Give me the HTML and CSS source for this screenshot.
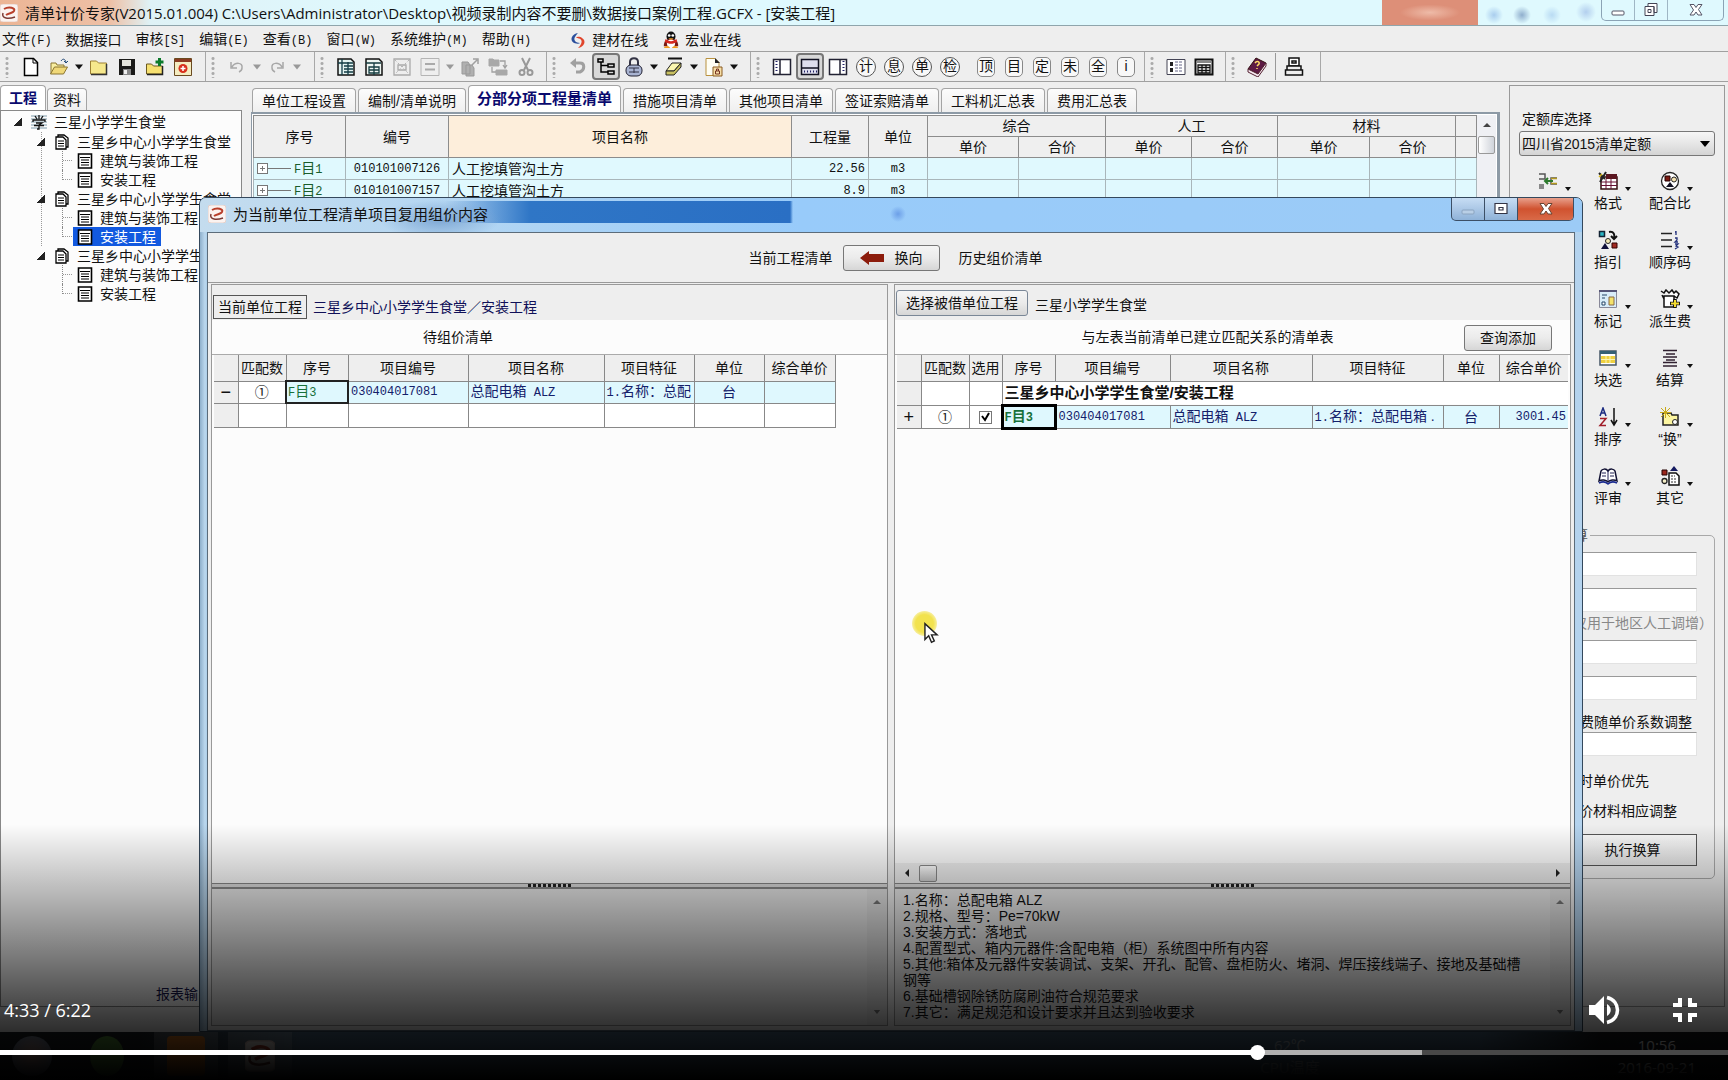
FILE: index.html
```html
<!DOCTYPE html>
<html lang="zh-CN">
<head>
<meta charset="utf-8">
<title>清单计价专家</title>
<link rel="stylesheet" href="styles.css">
</head>
<body>
<svg class="sprite" aria-hidden="true">
  <symbol id="logo" viewBox="0 0 18 18"><rect width="18" height="18" rx="3" fill="#fbf3f0" stroke="#e6cfc8"/><path d="M4 5c5-3 12-1 10 2-1 2-5 2-8 4" fill="none" stroke="#b8402c" stroke-width="2"/><path d="M3 9c-2 6 6 6 12 4" fill="none" stroke="#7b3a34" stroke-width="1.500"/></symbol>
  <symbol id="down" viewBox="0 0 10 6"><path d="M1 0.500h8l-4 5z" fill="currentColor"/></symbol>
  <symbol id="doc" viewBox="0 0 16 16"><path d="M4 3V1h6l4 3v9h-2M2 3h7l3 3v9H2z" fill="#fff" stroke="#000" stroke-width="1.300"/><path d="M4 7h6M4 9.500h6M4 12h6" stroke="#000"/></symbol>
  <symbol id="sheet" viewBox="0 0 16 16"><path d="M1.500 1h13v14h-13z" fill="#fff" stroke="#000" stroke-width="1.600"/><path d="M3 4.500h10M4 7h8M4 9.500h8M4 12h8" stroke="#000" stroke-width="1.200"/></symbol>
  <symbol id="up" viewBox="0 0 8 6"><path d="M0 5h8L4 1z" fill="currentColor"/></symbol>
</svg>
<div class="player">
  <div class="screen">
    <header class="titlebar">
      <svg class="i18"><use href="#logo"/></svg>
      <h1>清单计价专家(V2015.01.004) C:\Users\Administrator\Desktop\视频录制内容不要删\数据接口案例工程.GCFX - [安装工程]</h1>
      <span class="ghost"></span>
      <span class="dots"></span>
      <div class="winbtns">
        <button aria-label="最小化"><svg viewBox="0 0 16 16" class="i16"><rect x="2" y="9" width="12" height="4" rx="1" fill="#fff" stroke="#556"/></svg></button>
        <button aria-label="还原"><svg viewBox="0 0 16 16" class="i16"><path d="M5 1.500h9v9h-3V4.500H5zM2 4.500h9v9H2zM5 7.500h3v3H5z" fill="#fff" stroke="#445"/></svg></button>
        <button aria-label="关闭" class="wide"><svg viewBox="0 0 16 16" class="i16"><path d="M2 2.500h4l2 3 2-3h4l-3.500 5 3.500 5.500h-4l-2-3-2 3H2L5.500 8z" fill="#fff" stroke="#556"/></svg></button>
      </div>
    </header>

    <nav class="menubar">
      <a href="#">文件<span class="m">(F)</span></a><a href="#">数据接口</a><a href="#">审核<span class="m">[S]</span></a><a href="#">编辑<span class="m">(E)</span></a><a href="#">查看<span class="m">(B)</span></a><a href="#">窗口<span class="m">(W)</span></a><a href="#">系统维护<span class="m">(M)</span></a><a href="#">帮助<span class="m">(H)</span></a>
      <a href="#" class="online first"><svg viewBox="0 0 18 18" class="i18"><path d="M9 2C3 3 0 9 5 12c3 1 5 1 6 0C7 12 4 9 6 6c1-2 2-3 3-4z" fill="#2b4f9c"/><path d="M9 17c6-1 9-7 4-10-3-2-5-1-6 0 4 0 7 2 5 6-1 2-2 3-3 4z" fill="#e0452c"/></svg>建材在线</a>
      <a href="#" class="online"><svg viewBox="0 0 18 20" class="i18"><ellipse cx="9" cy="6" rx="5" ry="5.500" fill="#111"/><path d="M1 17c0-5 2-8 8-8s8 3 8 8z" fill="#7a1a14"/><ellipse cx="9" cy="14" rx="4.500" ry="4.500" fill="#fff"/><path d="M3 9c4 3 8 3 12 0l1 3c-5 3-9 3-14 0z" fill="#d5281f"/><circle cx="7" cy="5" r="1.500" fill="#fff"/><circle cx="11" cy="5" r="1.500" fill="#fff"/><path d="M6 8h6l-3 2zM1 19c1-3 6-3 7 0zM10 19c1-3 6-3 7 0z" fill="#f39a1d"/></svg>宏业在线</a>
    </nav>

    <div class="toolbar">
      <div class="group g1"><span class="grip"></span>
        <button aria-label="新建"><svg viewBox="0 0 20 20"><path d="M3.500 1.500h9l4 4v13h-13z" fill="#fff" stroke="#000" stroke-width="1.500"/><path d="M12 2v4h4" fill="none" stroke="#000"/></svg></button>
        <button aria-label="打开"><svg viewBox="0 0 20 20"><path d="M2 17V6h5l1 2h7v3" fill="#f8eea0" stroke="#8a7430"/><path d="M1.500 17l4-7h13l-4 7z" fill="#f0d878" stroke="#8a7430"/><path d="M12 4c2-3 4-2 5 1m-2-1l2 2 2-2" fill="none" stroke="#234a78"/></svg></button><span class="caret"><svg><use href="#down"/></svg></span>
        <button aria-label="目录"><svg viewBox="0 0 20 20"><path d="M1.500 17V4h6l2 2h8v11z" fill="#f6e88c" stroke="#9c8034"/><path d="M17.500 7v10.500H2" fill="none" stroke="#333" stroke-width="1.500"/></svg></button>
        <button aria-label="保存"><svg viewBox="0 0 20 20"><path d="M2 2h16v16H2z" fill="#1a1a18"/><path d="M5 3h9v6H5z" fill="#e4e4dc"/><path d="M6 12h8v6H6z" fill="#888"/><path d="M7 13h3v4H7z" fill="#eee"/></svg></button>
        <button aria-label="添加"><svg viewBox="0 0 20 20"><path d="M1.500 17V7h5l2 2h9v8z" fill="#f6e070" stroke="#6c5a20"/><path d="M17.500 9v8.500H2" fill="none" stroke="#222" stroke-width="1.500"/><path d="M14.500 1v8M10.500 5h8" stroke="#0c7a2a" stroke-width="3"/></svg></button>
        <button aria-label="备份"><svg viewBox="0 0 20 20"><path d="M1.500 1.500h17v17h-17z" fill="#f4ecc0" stroke="#6a4a20"/><path d="M2 2h16v3H2z" fill="#8a3a20"/><circle cx="10" cy="11.500" r="4.500" fill="#d8301c"/><path d="M10 9v5M7.500 11.500h5" stroke="#fff" stroke-width="1.500"/></svg></button>
      </div>
      <div class="group g2"><span class="grip"></span>
        <button aria-label="撤销"><svg viewBox="0 0 20 20"><path d="M4 5v6h6M5 10c3-5 11-5 10 1 0 2-1 3-3 4" fill="none" stroke="#a8a8a8" stroke-width="1.500"/></svg></button><span class="caret off"><svg><use href="#down"/></svg></span>
        <button aria-label="重做"><svg viewBox="0 0 20 20"><path d="M16 5v6h-6M15 10C12 5 4 5 5 11c0 2 1 3 3 4" fill="none" stroke="#a8a8a8" stroke-width="1.500"/></svg></button><span class="caret off"><svg><use href="#down"/></svg></span>
      </div>
      <div class="group g3"><span class="grip"></span>
        <button aria-label="插入行"><svg viewBox="0 0 20 20"><path d="M2 2h13l3 3v13H2z" fill="#e4f4f2" stroke="#111" stroke-width="1.500"/><path d="M2 6h15M6 2v16M8 9h9M8 12h9M8 15h9M12 5v13" stroke="#123c46" stroke-width="1.300"/></svg></button>
        <button aria-label="插入子行"><svg viewBox="0 0 20 20"><path d="M2 2h13l3 3v13H2z" fill="#eef6f2" stroke="#111" stroke-width="1.500"/><path d="M2 6h15M5 10h10v6H5zM5 13h10M10 6v12" fill="none" stroke="#143c40" stroke-width="1.300"/></svg></button>
        <button aria-label="展开"><svg viewBox="0 0 20 20"><path d="M2 2h16v16H2zM6 8h8v5H6z" fill="none" stroke="#aaa" stroke-width="1.300"/><path d="M3 3l14 14M17 3L3 17" stroke="#b4b4b4" stroke-dasharray="2 2"/></svg></button>
        <button aria-label="合并"><svg viewBox="0 0 20 20"><path d="M1 1.500h18v17H1z" fill="none" stroke="#b4b4b4"/><path d="M5 7h10M5 12.500h10" stroke="#aaa" stroke-width="2"/></svg></button><span class="caret off"><svg><use href="#down"/></svg></span>
        <button aria-label="复制"><svg viewBox="0 0 20 20"><path d="M2 5h6l2 3v9H2zM6 8h6l2 3v8H6z" fill="#b0b0b0" stroke="#999"/><path d="M12 8l5-5m-4-1h5v5" fill="none" stroke="#a0a0a0" stroke-width="1.500"/></svg></button>
        <button aria-label="粘贴"><svg viewBox="0 0 20 20"><path d="M1 2h4l1 1h5v6H1zM8 13h11v5H8z" fill="#a8a8a8" stroke="#a8a8a8"/><path d="M12 4h5v6m-2-2l2 3 2-3M4 10v5h4" fill="none" stroke="#a0a0a0" stroke-width="1.300"/></svg></button>
        <button aria-label="剪切"><svg viewBox="0 0 20 20"><path d="M6 1l6 12M14 1L8 13" stroke="#999" stroke-width="2"/><circle cx="6" cy="15.500" r="2.500" fill="none" stroke="#999" stroke-width="2"/><circle cx="14" cy="15.500" r="2.500" fill="none" stroke="#999" stroke-width="2"/></svg></button>
      </div>
      <div class="group g4"><span class="grip"></span>
        <button aria-label="返回"><svg viewBox="0 0 20 20"><path d="M8 1v10L2 6z" fill="#a0a0a0"/><path d="M7 6h5c5 0 5 7 0 9h-4" fill="none" stroke="#a0a0a0" stroke-width="3"/></svg></button>
        <button aria-label="树形" class="pressed"><svg viewBox="0 0 20 20"><path d="M2 2h5v3H2zM12 7h6v3h-6zM12 14h6v3h-6zM5 5v10h7M5 8.500h7" fill="none" stroke="#000" stroke-width="1.500"/></svg></button>
        <button aria-label="锁定"><svg viewBox="0 0 20 20"><path d="M6 9V5c0-5 8-5 8 0v4" fill="none" stroke="#334" stroke-width="2"/><rect x="2" y="8" width="16" height="11" rx="5" fill="#a9b4d2" stroke="#223"/><path d="M5 11h10M5 15h10M10 11v5" stroke="#334"/></svg></button><span class="caret"><svg><use href="#down"/></svg></span>
        <button aria-label="清除"><svg viewBox="0 0 20 20"><path d="M4 1.500h14" stroke="#111" stroke-width="2"/><path d="M8 6h9l-7 8H2z" fill="#fbf7b0" stroke="#222"/><path d="M2 14h8l7-8v4l-7 8H2z" fill="#c8c060" stroke="#222"/></svg></button><span class="caret"><svg><use href="#down"/></svg></span>
        <button aria-label="文件锁"><svg viewBox="0 0 20 20"><path d="M2 1.500h9l4 4v13H2z" fill="#fffef4" stroke="#b9913f"/><path d="M11 1v5h5z" fill="#222"/><path d="M9 10h9v9H9z" fill="#f6dfa8" stroke="#8a5a20"/><path d="M11.500 14h4v3h-4zM12.500 14v-2h2v2" fill="none" stroke="#732"/></svg></button><span class="caret"><svg><use href="#down"/></svg></span>
      </div>
      <div class="group g5"><span class="grip"></span>
        <button aria-label="左栏"><svg viewBox="0 0 20 20"><path d="M1.500 2.500h17v15h-17zM8 2v16" fill="#fff" stroke="#223" stroke-width="1.500"/><path d="M4.500 4v12" stroke="#226" stroke-width="2" stroke-dasharray="1 2"/></svg></button>
        <button aria-label="下栏" class="pressed"><svg viewBox="0 0 20 20"><path d="M1.500 2.500h17v15h-17zM2 11h16" fill="#dde" stroke="#112" stroke-width="1.500"/><path d="M4 14.500h13" stroke="#226" stroke-width="2" stroke-dasharray="1 2"/></svg></button>
        <button aria-label="右栏"><svg viewBox="0 0 20 20"><path d="M1.500 2.500h17v15h-17zM12 2v16" fill="#fff" stroke="#223" stroke-width="1.500"/><path d="M15.500 4v12" stroke="#226" stroke-width="2" stroke-dasharray="1 2"/></svg></button>
        <button><span class="ring">计</span></button><button><span class="ring">息</span></button><button><span class="ring">单</span></button><button><span class="ring">检</span></button>
        <button class="gap"><span class="ring sq">顶</span></button><button><span class="ring sq">目</span></button><button><span class="ring sq">定</span></button><button><span class="ring sq">未</span></button><button><span class="ring sq">全</span></button><button><span class="ring sq">i</span></button>
      </div>
      <div class="group g6"><span class="grip"></span>
        <button aria-label="列表"><svg viewBox="0 0 20 20"><path d="M1 2.500h18v15H1z" fill="#fff" stroke="#445"/><path d="M4 5h3v4H4zM4 11h3v4H4z" fill="#222"/><path d="M9 5h8M9 8h8M9 11h8M9 14h8" stroke="#668" stroke-dasharray="3 1"/></svg></button>
        <button aria-label="表格"><svg viewBox="0 0 20 20"><path d="M1.500 2.500h17v15h-17z" fill="#fff" stroke="#111" stroke-width="2"/><path d="M3 5h14" stroke="#111"/><path d="M4 8h12v8H4zM4 10.500h12M4 13.500h12M8 8v8M12 8v8" fill="none" stroke="#111" stroke-width="1.300"/></svg></button>
      </div>
      <div class="group g7"><span class="grip"></span>
        <button aria-label="帮助"><svg viewBox="0 0 20 20"><path d="M1 12L9 1l10 5-8 11z" fill="#5d1a44" stroke="#311"/><path d="M1 12v3l10 5 8-11V6l-8 11z" fill="#f4e8ee" stroke="#523"/><path d="M8 6c2-3 5-1 4 1l-2 2m0 2v1" fill="none" stroke="#fd6" stroke-width="1.500"/></svg></button>
        <button aria-label="打印" class="sepd"><svg viewBox="0 0 20 20"><path d="M5 1h10v8H5zM8 4h4v2H8z" fill="#fff" stroke="#111" stroke-width="1.500"/><path d="M3 9h14v4H3zM1.500 13h17v5h-17z" fill="#eee" stroke="#111" stroke-width="1.500"/></svg></button>
      </div>
    </div>

    <div class="workspace">
      <aside class="side">
        <div class="tabs small"><button class="tab on">工程</button><button class="tab">资料</button></div>
        <div class="treebox">
          <div class="node lv0"><i class="tri"></i><svg class="i16 stripe" viewBox="0 0 16 16"><path d="M0 2h16M0 5h16M0 8h16M0 11h16M0 14h16" stroke="#7f9cab"/><path d="M4 2l2 3M8 1v4M12 2l-2 3M2 8V6h12v2M5 9h6l-3 2v4H6M3 11.500h10" fill="none" stroke="#111" stroke-width="1.300"/></svg>三星小学学生食堂</div>
          <div class="branch cont">
            <div class="node lv1"><i class="tri"></i><svg class="i16"><use href="#doc"/></svg>三星乡中心小学学生食堂</div>
            <div class="node lv2"><i class="elbow"></i><span class="leaf"><svg class="i16"><use href="#sheet"/></svg>建筑与装饰工程</span></div>
            <div class="node lv2"><i class="elbow last"></i><span class="leaf"><svg class="i16"><use href="#sheet"/></svg>安装工程</span></div>
          </div>
          <div class="branch cont">
            <div class="node lv1"><i class="tri"></i><svg class="i16"><use href="#doc"/></svg>三星乡中心小学学生食堂</div>
            <div class="node lv2"><i class="elbow"></i><span class="leaf"><svg class="i16"><use href="#sheet"/></svg>建筑与装饰工程</span></div>
            <div class="node lv2"><i class="elbow last"></i><span class="leaf sel"><svg class="i16"><use href="#sheet"/></svg>安装工程</span></div>
          </div>
          <div class="branch">
            <div class="node lv1"><i class="tri"></i><svg class="i16"><use href="#doc"/></svg>三星乡中心小学学生食堂</div>
            <div class="node lv2"><i class="elbow"></i><span class="leaf"><svg class="i16"><use href="#sheet"/></svg>建筑与装饰工程</span></div>
            <div class="node lv2"><i class="elbow last"></i><span class="leaf"><svg class="i16"><use href="#sheet"/></svg>安装工程</span></div>
          </div>
          <a href="#" class="report">报表输出</a>
        </div>
      </aside>

      <main class="center">
        <div class="tabs"><button class="tab">单位工程设置</button><button class="tab">编制/清单说明</button><button class="tab on">分部分项工程量清单</button><button class="tab">措施项目清单</button><button class="tab">其他项目清单</button><button class="tab">签证索赔清单</button><button class="tab">工料机汇总表</button><button class="tab">费用汇总表</button></div>
        <div class="gridframe">
          <table class="maingrid">
            <colgroup><col class="w92"><col class="w103"><col><col class="w77"><col class="w59"><col class="w91"><col class="w87"><col class="w86"><col class="w86"><col class="w92"><col class="w86"><col class="w21"></colgroup>
            <thead>
              <tr><th rowspan="2">序号</th><th rowspan="2">编号</th><th rowspan="2" class="hot">项目名称</th><th rowspan="2">工程量</th><th rowspan="2">单位</th><th colspan="2">综合</th><th colspan="2">人工</th><th colspan="2">材料</th><th></th></tr>
              <tr><th>单价</th><th>合价</th><th>单价</th><th>合价</th><th>单价</th><th>合价</th><th></th></tr>
            </thead>
            <tbody>
              <tr><td class="seq"><span class="exp"></span><span class="m">F</span>目<span class="m">1</span></td><td class="c m">010101007126</td><td>人工挖填管沟土方</td><td class="r m">22.56</td><td class="c m">m3</td><td></td><td></td><td></td><td></td><td></td><td></td><td></td></tr>
              <tr><td class="seq"><span class="exp"></span><span class="m">F</span>目<span class="m">2</span></td><td class="c m">010101007157</td><td>人工挖填管沟土方</td><td class="r m">8.9</td><td class="c m">m3</td><td></td><td></td><td></td><td></td><td></td><td></td><td></td></tr>
            </tbody>
          </table>
          <div class="vbar"><svg class="arr"><use href="#up"/></svg><span class="vthumb"></span></div>
        </div>
      </main>

      <aside class="palette">
        <label for="lib">定额库选择</label>
        <select id="lib"><option>四川省2015清单定额</option></select>
        <div class="tools">
          <button class="tool c1 dd" aria-label="插入"><svg viewBox="0 0 20 20"><path d="M1 3h6v5H1M19 7h-6v6h6" fill="none" stroke="#555" stroke-width="1.500"/><path d="M13 7.500h6M13 12.500h6" stroke="#b59a20" stroke-width="1.500"/><path d="M7 10h8M10 7l-3 3 3 3" fill="none" stroke="#2c7a2c" stroke-width="2"/><path d="M1 13h5v5H1z" fill="#888"/></svg></button>
          <button class="tool dd"><svg viewBox="0 0 20 20"><path d="M3 6h16v12H3z" fill="#fff" stroke="#311" stroke-width="1.500"/><path d="M8 3h11v5H8z" fill="#5a1620"/><path d="M3 11h16M3 14.500h16M8 8v10M13 8v10" stroke="#613"/><path d="M1 2l6 6M8 1l-6 10" stroke="#222" stroke-width="2"/><path d="M1 6l3-3" stroke="#d8b81c" stroke-width="1.500"/></svg>格式</button>
          <button class="tool dd"><svg viewBox="0 0 20 20"><circle cx="10" cy="10" r="8.500" fill="#fff" stroke="#222" stroke-width="1.300"/><path d="M5 5h5v5H5z" fill="#7a1a12" stroke="#200"/><circle cx="14" cy="8.500" r="2.500" fill="#f5e3b0" stroke="#222"/><path d="M6 16l4-5 4 5z" fill="#112"/></svg>配合比</button>
          <button class="tool"><svg viewBox="0 0 20 20"><path d="M1.500 1.500h5v5h-5z" fill="#2ab5c4" stroke="#123" stroke-width="1.500"/><path d="M11 2c5-1 6 3 5 6m-3-2l3 3 3-3" fill="none" stroke="#111" stroke-width="2"/><circle cx="10" cy="11" r="2.500" fill="#f4e9b4" stroke="#222"/><path d="M3 19l4-6 4 6z" fill="#10103a"/><path d="M14 13h5v5h-5z" fill="#a02a22" stroke="#300"/></svg>指引</button>
          <button class="tool dd"><svg viewBox="0 0 20 20"><path d="M1 3.500h11M1 10h11M1 16.500h11" stroke="#222" stroke-width="1.500"/><path d="M16 1v4m-1-3h1M15 8h2v2l-2 2h3M15 14h3l-2 2 2 1-3 2" fill="none" stroke="#22307c" stroke-width="1.300"/></svg>顺序码</button>
          <button class="tool dd"><svg viewBox="0 0 20 20"><path d="M1.500 1.500h17v17h-17z" fill="#d8ecf8" stroke="#889"/><path d="M1 2h18" stroke="#557" stroke-width="2"/><path d="M4 6h5M4 9h3M4 13h3v3H4z" stroke="#246" fill="#fff"/><path d="M11 8h5v8h-5z" fill="#f4e26a" stroke="#864"/></svg>标记</button>
          <button class="tool dd"><svg viewBox="0 0 20 20"><path d="M1 2l3 2 2-3 3 3 3-3 2 3 2-2 3 3-2 4-3-2M2 6l2 4M4 7h10v11H4z" fill="#fff" stroke="#111" stroke-width="1.500"/><path d="M15 10v9M10 14.500h10" stroke="#111" stroke-width="3.500"/><path d="M15 11v7M11 14.500h8" stroke="#f4dc30" stroke-width="2"/></svg>派生费</button>
          <button class="tool dd"><svg viewBox="0 0 20 20"><path d="M2 3h16v14H2z" fill="#fff" stroke="#456" stroke-width="1.500"/><path d="M2 3h16v3H2z" fill="#356074"/><path d="M3 8h14v7H3z" fill="#eed040"/><path d="M3 11.500h14M8 8v7M12 8v7" stroke="#fbf4b0"/></svg>块选</button>
          <button class="tool dd"><svg viewBox="0 0 20 20"><path d="M3 2.500h14M6 6h9M3 9h14M6 12h9M3 14.500h14M3 18h14" stroke="#302030" stroke-width="1.300"/></svg>结算</button>
          <button class="tool dd"><svg viewBox="0 0 20 20"><path d="M2 9l3-8 3 8M3 6h4" fill="none" stroke="#1a2a80" stroke-width="1.500"/><path d="M2 11.500h6L2 18.500h6" fill="none" stroke="#a01c28" stroke-width="1.500"/><path d="M16 1v16m-3-4l3 5 3-5" fill="none" stroke="#111" stroke-width="1.500"/></svg>排序</button>
          <button class="tool dd"><svg viewBox="0 0 20 20"><path d="M3 6h8l1 2h6v10H3z" fill="#fcf5a0" stroke="#222" stroke-width="1.500"/><path d="M1 1l9 9M10 1L1 10M5.500 0v11M0 5.500h11" stroke="#c9aa18"/><circle cx="15" cy="15" r="2.500" fill="#fff" stroke="#222"/></svg>“换”</button>
          <button class="tool dd"><svg viewBox="0 0 20 20"><path d="M10 5c-2-3-6-2-7 0l-2 10c3-2 7-1 9 1 2-2 6-3 9-1L17 5c-1-2-5-3-7 0z" fill="#fff" stroke="#113" stroke-width="1.500"/><path d="M10 5v10M4 7h4M4 10h4M12 7h4M12 10h4" stroke="#225"/><path d="M1 17c4-2 7-1 9 1 2-2 5-3 9-1" fill="none" stroke="#1a2a90" stroke-width="1.500"/></svg>评审</button>
          <button class="tool dd"><svg viewBox="0 0 20 20"><path d="M2 4h5v5H2z" fill="#9a261c" stroke="#200"/><path d="M10 5l4-5 4 5z" fill="#141a60"/><circle cx="4.500" cy="15" r="2.500" fill="#f5efc8" stroke="#222" stroke-width="1.300"/><path d="M9 7h7l3 3v9H9z" fill="#fff" stroke="#111" stroke-width="1.500"/><path d="M11 10h4M11 13h6M11 16h6" stroke="#333" stroke-dasharray="2 1"/></svg>其它</button>
        </div>
        <fieldset>
          <legend>换算</legend>
          <input aria-label="系数一"><input aria-label="系数二">
          <p class="hint">(仅用于地区人工调增）</p>
          <input aria-label="系数三"><input aria-label="系数四">
          <p class="n1">管理费随单价系数调整</p>
          <input aria-label="系数五" class="tight">
          <p class="n2">换算时单价优先</p>
          <p class="n3">换算定价材料相应调整</p>
          <button class="exec">执行换算</button>
        </fieldset>
      </aside>
    </div>

    <footer class="taskbar">
      <span class="orb"></span><span class="orb green"></span><span class="task"><b class="org"></b></span><span class="task"><svg class="i30"><use href="#logo"/></svg></span>
      <span class="temp">62℃<br>CPU温度</span>
      <span class="clock">10:56<br>2016-09-21</span>
    </footer>
  </div>

  <section class="dialog" role="dialog" aria-labelledby="dt">
    <header class="dtitle">
      <svg class="i18"><use href="#logo"/></svg><h2 id="dt">为当前单位工程清单项目复用组价内容</h2>
      <div class="winbtns d">
        <button aria-label="最小化"><svg viewBox="0 0 16 16" class="i16"><rect x="2" y="9" width="12" height="4" rx="1" fill="#b9cfe6" stroke="#8ba4c0"/></svg></button>
        <button aria-label="最大化"><svg viewBox="0 0 16 16" class="i16"><path d="M2 2.500h12v10H2zM6 6.500h4v2.500H6z" fill="#fff" stroke="#334" stroke-width="1.200"/></svg></button>
        <button aria-label="关闭" class="wide red"><svg viewBox="0 0 16 16" class="i16"><path d="M2 2.500h4l2 3 2-3h4l-3.500 5 3.500 5.500h-4l-2-3-2 3H2L5.500 8z" fill="#fff" stroke="#643"/></svg></button>
      </div>
    </header>
    <div class="client">
      <div class="swap"><span>当前工程清单</span><button class="btn"><svg viewBox="0 0 24 14" class="redarrow"><path d="M0 7l9-7v3h15v8H9v3z" fill="#8c1c0c"/></svg>换向</button><span>历史组价清单</span></div>
      <div class="panes">
        <section class="pane">
          <div class="bar"><button class="flat">当前单位工程</button><span class="navy">三星乡中心小学学生食堂／安装工程</span></div>
          <div class="cap capl"><span>待组价清单</span></div>
          <div class="area">
            <table class="grid left">
              <colgroup><col class="w24"><col class="w48"><col class="w62"><col class="w120"><col class="w136"><col class="w90"><col class="w70"><col class="w71"></colgroup>
              <thead><tr><th></th><th>匹配数</th><th>序号</th><th>项目编号</th><th>项目名称</th><th>项目特征</th><th>单位</th><th>综合单价</th></tr></thead>
              <tbody>
                <tr class="data"><th class="sign">−</th><td class="c w">①</td><td class="cur"><span class="m">F</span>目<span class="m">3</span></td><td class="m">030404017081</td><td>总配电箱<span class="m"> ALZ</span></td><td><span class="m">1.</span>名称：总配</td><td class="c">台</td><td></td></tr>
                <tr class="h24"><th></th><td></td><td></td><td></td><td></td><td></td><td></td><td></td></tr>
              </tbody>
            </table>
          </div>
          <div class="split"><i></i></div>
          <div class="memo"><div class="text"></div><div class="mbar"><svg class="arr"><use href="#up"/></svg><svg class="arr"><use href="#down"/></svg></div></div>
        </section>
        <section class="pane">
          <div class="bar"><button class="btn">选择被借单位工程</button><span class="source">三星小学学生食堂</span></div>
          <div class="cap capr"><span>与左表当前清单已建立匹配关系的清单表</span><button class="btn">查询添加</button></div>
          <div class="area">
            <table class="grid right">
              <colgroup><col class="w24"><col class="w48"><col class="w33"><col class="w53"><col class="w115"><col class="w142"><col class="w131"><col class="w56"><col></colgroup>
              <thead><tr><th></th><th>匹配数</th><th>选用</th><th>序号</th><th>项目编号</th><th>项目名称</th><th>项目特征</th><th>单位</th><th>综合单价</th></tr></thead>
              <tbody>
                <tr class="h24"><th></th><td></td><td></td><td colspan="6" class="ttl">三星乡中心小学学生食堂/安装工程</td></tr>
                <tr class="data"><th class="sign">+</th><td class="c w">①</td><td class="c w"><input type="checkbox" checked aria-label="选用"></td><td class="cur thick"><span class="m">F</span>目<span class="m">3</span></td><td class="m">030404017081</td><td>总配电箱<span class="m"> ALZ</span></td><td><span class="m">1.</span>名称：总配电箱 .</td><td class="c">台</td><td class="r m">3001.45</td></tr>
              </tbody>
            </table>
          </div>
          <div class="hbar"><i class="la"></i><span></span><i class="ra"></i></div>
          <div class="split"><i></i></div>
          <div class="memo"><div class="text">1.名称：总配电箱 ALZ<br>2.规格、型号：Pe=70kW<br>3.安装方式：落地式<br>4.配置型式、箱内元器件:含配电箱（柜）系统图中所有内容<br>5.其他:箱体及元器件安装调试、支架、开孔、配管、盘柜防火、堵洞、焊压接线端子、接地及基础槽<br>钢等<br>6.基础槽钢除锈防腐刷油符合规范要求<br>7.其它：满足规范和设计要求并且达到验收要求</div><div class="mbar"><svg class="arr"><use href="#up"/></svg><svg class="arr"><use href="#down"/></svg></div></div>
        </section>
      </div>
    </div>
  </section>

  <div class="spot"></div>
  <svg class="pointer" viewBox="0 0 16 22"><path d="M1 1v17l4-4 3 7 3-1.500-3-6.500h6z" fill="#fff" stroke="#222" stroke-width="1.500"/></svg>

  <div class="controls">
    <div class="crow">
      <span class="time">4:33 / 6:22</span>
      <button aria-label="音量"><svg viewBox="0 0 32 30" width="32" height="30"><path d="M0 10h6l9-9v28l-9-9H0z" fill="#fff"/><path d="M18 9c5 3 5 9 0 12z" fill="#fff"/><path d="M18 2.500c14 3 14 22 0 25" fill="none" stroke="#fff" stroke-width="3.500"/></svg></button>
      <button aria-label="退出全屏" class="fs"><svg viewBox="0 0 24 24" width="24" height="24"><path d="M0 7h7V0M24 7h-7V0M0 17h7v7M24 17h-7v7" fill="none" stroke="#fff" stroke-width="4"/></svg></button>
    </div>
    <input type="range" class="seek" min="0" max="1000" value="730" aria-label="播放进度">
  </div>
</div>
</body>
</html>
```
FILE: styles.css
```css
* { box-sizing: border-box; }
body { margin: 0; font: 14px/18px "Liberation Sans", "Noto Sans CJK SC", sans-serif; color: #111; background: #000; }
button, input, select { font: inherit; color: inherit; }
button { padding: 0; border: 0; background: none; white-space: nowrap; }
a { color: inherit; text-decoration: none; }
h1, h2, p { margin: 0; font-weight: 400; }
.m { font-family: "Liberation Mono", "Noto Sans CJK SC", monospace; font-size: 12px; white-space: pre; }
.sprite { position: absolute; width: 0; height: 0; }
.i16 { width: 16px; height: 16px; flex: none; }
.i18 { width: 18px; height: 18px; flex: none; }
.i30 { width: 30px; height: 34px; }

.player { position: relative; min-height: 100vh; overflow: hidden; }
.screen { display: flex; flex-direction: column; min-height: 100vh; background: #eee; }

/* main window frame */
.titlebar { display: flex; align-items: center; height: 26px; border-bottom: 1px solid #8fa5ac; background: linear-gradient(90deg, #ecb595 0, #eec0a6 110px, #dff2f6 150px, #dff9fe 400px); }
.titlebar h1, .dtitle h2 { font: 15px/22px "Open Sans", "Noto Sans CJK SC", sans-serif; white-space: nowrap; margin-left: 7px; }
.titlebar h1 { flex: 1; }
.ghost { width: 96px; height: 25px; background: radial-gradient(ellipse 30px 8px, #eebba8, #dd8f78); }
.dots { width: 123px; height: 25px; background: radial-gradient(circle 9px at 16px 15px, #a9cdee, transparent), radial-gradient(circle 9px at 44px 15px, #8faecd, transparent), radial-gradient(circle 9px at 74px 15px, #b9dbf3, transparent), radial-gradient(circle 10px at 108px 12px, #b3cfee, transparent); }
.winbtns { display: flex; align-self: flex-start; height: 21px; margin-right: 4px; border: 1px solid #8ba3b5; border-top: 0; border-radius: 0 0 5px 5px; overflow: hidden; }
.winbtns button { display: grid; place-items: center; width: 33px; border-right: 1px solid #9fb6c4; }
.winbtns .wide { width: 55px; border-right: 0; }
.winbtns.d { height: 23px; border-color: #3c4f66; background: linear-gradient(#c7ddf4, #8fb2d8); }
.winbtns.d button { border-color: #3c4f66; }
.winbtns.d .red { background: linear-gradient(#e8a08c, #d0522f 50%, #d96a48); }

.menubar { display: flex; align-items: center; gap: 14px; height: 25px; padding: 2px 0 0 2px; white-space: nowrap; }
.online { display: flex; align-items: center; gap: 5px; }
.online.first { margin-left: 24px; }

.toolbar { display: flex; height: 31px; border-top: 1px solid #a0a0a0; border-bottom: 1px solid #a0a0a0; }
.group { display: flex; align-items: center; border-right: 1px solid #a8a8a8; }
.grip { width: 17px; height: 22px; background: radial-gradient(circle, #aaa 1px, transparent 2px) 5px 0 / 4px 5px repeat-y; flex: none; }
.toolbar button { display: grid; place-items: center; width: 28px; height: 27px; }
.toolbar button svg { width: 20px; height: 20px; }
.toolbar .pressed { border: 2px solid #777; border-radius: 4px; background: #d8d8d8; }
.caret { display: grid; place-items: center; width: 12px; color: #111; }
.caret.off { color: #999; }
.caret svg { width: 10px; height: 6px; }
.g1 { padding-right: 8px; }
.g2 { padding-right: 11px; }
.g3 { padding-right: 6px; }
.g4 { padding-right: 10px; }
.g5 { padding-right: 4px; }
.g6 { padding-right: 7px; }
.g7 { padding-right: 8px; }
.toolbar .gap { margin-left: 8px; }
.toolbar .sepd { width: 37px; margin-left: 4px; border-left: 1px solid #999; }
.ring { width: 20px; height: 20px; border: 1px solid #555; border-radius: 10px; line-height: 17px; text-align: center; background: #f8f8f8; }
.ring.sq { width: 18px; border-color: #888; border-radius: 5px; }

/* workspace */
.workspace { display: flex; flex: 1; min-height: 0; padding: 3px 3px 25px 0; }
.tabs { display: flex; align-items: flex-end; gap: 2px; height: 27px; }
.tab { height: 24px; padding: 0 9px; border: 1px solid #a4a4a4; border-bottom: 0; border-radius: 4px 4px 0 0; background: linear-gradient(#fcfcfc, #efefef); }
.tab.on { height: 27px; padding: 0 8px; color: #0a0a6e; font-weight: 700; font-size: 15px; background: #fff; }
.small { height: 25px; gap: 1px; }
.small .tab { padding: 0 5px; height: 22px; }
.small .tab.on { height: 25px; font-size: 14px; padding: 0 8px; }
.side { display: flex; flex-direction: column; width: 242px; flex: none; }
.treebox { position: relative; flex: 1; padding-top: 1px; border: 1px solid #888; background: #fcfcfc; overflow: hidden; white-space: nowrap; }
.node { display: flex; align-items: center; height: 19px; }
.node > svg { margin: 0 7px 0 9px; }
.tri { width: 8px; height: 8px; background: linear-gradient(135deg, transparent 50%, #222 50%); }
.lv0 { height: 20px; padding-left: 13px; }
.branch { margin-left: 40px; border-left: 1px solid transparent; }
.branch .tri { margin-left: -5px; }
.branch.cont { border-left: 1px dotted #999; }
.elbow { width: 11px; height: 19px; margin-left: 20px; border-left: 1px dotted #888; background: repeating-linear-gradient(90deg, #999 0 1px, transparent 1px 2px) 0 9px / 100% 1px no-repeat; }
.elbow.last { height: 10px; align-self: flex-start; }
.leaf { display: flex; align-items: center; gap: 7px; height: 19px; padding: 0 5px 0 4px; }
.leaf.sel { background: #1259e0; color: #fff; }
.report { position: absolute; left: 155px; bottom: 3px; color: #16164e; }

.center { display: flex; flex-direction: column; flex: 1; min-width: 0; padding: 0 9px 0 9px; }
.center .tabs { padding-left: 1px; }
.gridframe { display: flex; flex: 1; padding: 1px; border: 1px solid #8d9aa6; border-width: 2px 3px 1px 1px; background: #fff; }
.maingrid, .grid { border-collapse: collapse; table-layout: fixed; }
.maingrid { width: 100%; align-self: flex-start; }
.maingrid th { height: 21px; padding: 0; border: 1px solid #8c8c8c; background: #efefef; font-weight: 400; line-height: 18px; }
.maingrid th.hot { background: #fdeedb; }
.maingrid td { height: 22px; padding: 0 3px; border: 1px solid #a9b6ba; background: #e0f9fe; line-height: 18px; white-space: nowrap; overflow: hidden; }
.c { text-align: center; }
.r { text-align: right; }
.maingrid .seq { color: #1a5c2c; }
.exp { display: inline-block; width: 34px; height: 11px; margin-right: 3px; vertical-align: -1px; background: linear-gradient(#777, #777) 3px 5px / 5px 1px no-repeat, linear-gradient(#777, #777) 5px 3px / 1px 5px no-repeat, linear-gradient(#777, #777) 11px 5px / 23px 1px no-repeat, linear-gradient(#fff, #fff) 1px 1px / 9px 9px no-repeat, linear-gradient(#777, #777) 0 0 / 11px 11px no-repeat; }
.w21 { width: 21px; }
.w24 { width: 24px; }
.w33 { width: 33px; }
.w48 { width: 48px; }
.w53 { width: 53px; }
.w56 { width: 56px; }
.w59 { width: 59px; }
.w62 { width: 62px; }
.w70 { width: 70px; }
.w71 { width: 71px; }
.w77 { width: 77px; }
.w86 { width: 86px; }
.w87 { width: 87px; }
.w90 { width: 90px; }
.w91 { width: 91px; }
.w92 { width: 92px; }
.w103 { width: 103px; }
.w115 { width: 115px; }
.w120 { width: 120px; }
.w131 { width: 131px; }
.w136 { width: 136px; }
.w142 { width: 142px; }
.vbar { display: flex; flex-direction: column; align-items: center; gap: 8px; width: 19px; padding-top: 7px; background: #eff0f4; flex: none; color: #444; }
.arr { width: 8px; height: 6px; flex: none; }
.vthumb { width: 17px; height: 18px; border: 1px solid #999; border-radius: 2px; background: linear-gradient(90deg, #fff, #cfd3da); }

.palette { display: flex; flex-direction: column; width: 216px; flex: none; padding: 23px 9px 0; border: 1px solid #999; }
.palette label { padding-left: 3px; line-height: 20px; }
.palette select { height: 25px; margin-top: 2px; padding-left: 2px; border: 1px solid #777; border-radius: 3px; appearance: none; background: url("data:image/svg+xml,%3Csvg xmlns='http://www.w3.org/2000/svg' width='10' height='6'%3E%3Cpath d='M0 0h10L5 6z'/%3E%3C/svg%3E") right 4px center no-repeat, linear-gradient(#f6f6f6, #e6e6e6 50%, #d4d4d4); }
.tools { display: grid; grid-template-columns: 58px 62px 62px; grid-auto-rows: 59px; margin-top: 15px; }
.tool { position: relative; display: flex; flex-direction: column; align-items: center; gap: 2px; line-height: 20px; }
.tool svg { width: 20px; height: 20px; flex: none; }
.tool.dd::after { content: ""; position: absolute; left: 50%; top: 16px; margin-left: 17px; border: 3px solid transparent; border-top: 4px solid #111; border-bottom: 0; }
.tool:nth-child(even) { grid-column-start: 2; }
.tool.c1 { grid-column-start: 1; }
fieldset { display: flex; flex-direction: column; margin: 1px 0 0; padding: 8px 17px 12px 10px; border: 1px solid #a8a8a8; border-radius: 5px; min-width: 0; }
legend { margin-left: 28px; padding: 0 2px; color: #555; line-height: 18px; }
fieldset input { width: 100%; height: 24px; margin-bottom: 12px; border: 1px solid #e2e2e2; border-top-color: #999; background: #fff; }
fieldset input:nth-of-type(2) { margin-bottom: 0; }
fieldset p { white-space: nowrap; text-align: right; line-height: 18px; }
fieldset .hint { margin: 2px -16px 8px 0; color: #888; }
fieldset .n1 { margin: 1px 5px 1px 0; }
fieldset .tight { margin-bottom: 16px; }
fieldset .n2 { margin: 0 48px 12px 0; }
fieldset .n3 { margin: 0 20px 14px 0; }
.exec { height: 32px; padding-left: 38px; border: 1px solid #555; background: linear-gradient(#f8f8f8, #e6e6e6); }

.taskbar { display: flex; align-items: center; height: 48px; padding-left: 12px; gap: 30px; background: linear-gradient(90deg, #1c2024 140px, #4c6a84 300px, #4c6a84 1480px, #15181c 1600px); color: #fff; text-align: center; font: 15px/22px "Open Sans", "Noto Sans CJK SC", sans-serif; }
.orb { width: 40px; height: 40px; border-radius: 50%; background: radial-gradient(#c98, #579); flex: none; }
.orb.green { width: 34px; margin-left: 8px; background: #5a9a3c; }
.task { display: grid; place-items: center; width: 64px; height: 48px; background: rgba(255, 255, 255, .2); flex: none; }
.task + .task { margin-left: -20px; }
.org { width: 38px; height: 40px; border-radius: 4px; background: #e07a20; }
.temp { margin-left: auto; opacity: .5; }
.clock { margin: 0 32px 0 268px; }

/* dialog window */
.dialog { position: absolute; left: 199px; right: 145px; top: 197px; bottom: 48px; display: flex; flex-direction: column; border: 1px solid #34485c; border-radius: 7px 7px 0 0; overflow: hidden; background: linear-gradient(90deg, #8fb0cc, #bcd8ee 5px, #a4c8e6 8px, #a9cdec 50%, #b4d3ee); }
.dtitle { display: flex; align-items: center; height: 34px; padding: 0 0 2px 8px; flex: none; background: radial-gradient(ellipse 60px 20px at 240px 22px, #7fa8d4, transparent), linear-gradient(90deg, transparent 245px, #2f76c6 330px, #2a6fc4 590px, transparent 593px) 0 3px / 100% 22px no-repeat, radial-gradient(circle 8px at 698px 16px, #6c9fe8, transparent), linear-gradient(90deg, #c4dcee, #b4d6f2 250px, #98cbfa 600px, #9ccbf6); }
.dtitle h2 { flex: 1; margin-left: 7px; }
.dtitle .winbtns { margin-right: 8px; }
.client { display: flex; flex-direction: column; flex: 1; min-height: 0; margin: 0 7px; border: 1px solid #5c6c7a; background: #eee; }
.swap { display: flex; align-items: center; justify-content: center; gap: 19px; height: 50px; padding-left: 9px; border-bottom: 1px solid #999; flex: none; }
.swap span:first-child { margin-right: -9px; }
.btn { display: flex; align-items: center; justify-content: center; height: 26px; padding: 0 14px; border: 1px solid #777; border-radius: 3px; background: linear-gradient(#f5f5f5, #ebebeb 50%, #d6d6d6); }
.swap .btn { width: 97px; gap: 11px; }
.redarrow { width: 24px; height: 14px; }
.panes { display: flex; gap: 6px; flex: 1; min-height: 0; padding: 1px 3px 4px; }
.pane { display: flex; flex-direction: column; flex: 1; min-width: 0; border: 1px solid #999; background: #fcfcfc; }
.bar { display: flex; align-items: center; gap: 7px; height: 35px; padding-left: 1px; background: #eee; flex: none; white-space: nowrap; }
.bar .btn { padding: 0 9px; border-color: #7a8797; }
.flat { height: 24px; padding: 0 4px; border: 1px solid #555; margin-top: 8px; }
.navy { margin: 8px 0 0 -1px; color: #101058; }
.source { margin-top: 4px; }
.cap { display: flex; align-items: center; height: 34px; flex: none; white-space: nowrap; }
.capl { padding-left: 211px; }
.capr { padding-right: 18px; }
.capr span { flex: 1; text-align: center; padding-left: 56px; }
.capr .btn { width: 88px; padding: 0; margin-top: 2px; }
.area { flex: 1; min-height: 0; padding: 0 2px; border-top: 1px solid #aaa; }
.grid th, .grid td { height: 22px; padding: 0; border: 1px solid #888; font-weight: 400; line-height: 18px; white-space: nowrap; overflow: hidden; }
.grid th { background: #eee; }
.grid thead th { height: 26px; border-top: 0; }
.grid .sign { font-size: 18px; }
.grid .h24 td, .grid .h24 th { height: 24px; }
.grid td { padding: 0 2px; background: #fff; }
.grid .data td { background: #dff8fe; color: #14206a; }
.grid .data td.w { background: #fff; color: #111; }
.grid .data .cur { color: #17703a; border: 2px solid #222; padding: 0 1px; }
.grid .data .cur.thick { border: 3px solid #000; font-weight: 700; }
.grid tr > :first-child { border-left: 0; }
.grid.left { width: 621px; }
.grid.right { width: 100%; }
.grid .ttl { font-weight: 700; font-size: 15px; }
.grid.right tr > :last-child { border-right: 0; }
.grid input { width: 13px; height: 13px; margin: 0; vertical-align: -2px; appearance: none; border: 1px solid #777; background: url("data:image/svg+xml,%3Csvg xmlns='http://www.w3.org/2000/svg' width='11' height='11'%3E%3Cpath d='M2 4l3 4 4-7' fill='none' stroke='%23000' stroke-width='2'/%3E%3C/svg%3E") center no-repeat #fff; }
.hbar { display: flex; align-items: center; height: 20px; padding: 0 10px; gap: 10px; background: #eee; flex: none; }
.hbar span { width: 18px; height: 17px; border: 1px solid #888; border-radius: 2px; background: linear-gradient(#fff, #ccc); }
.la, .ra { border: 4px solid transparent; }
.la { border-right-color: #222; border-left: 0; }
.ra { border-left-color: #222; border-right: 0; margin-left: auto; }
.split { display: grid; place-items: center; height: 6px; border: 1px solid #888; border-width: 1px 0 2px; background: #ddd; flex: none; }
.split i { width: 43px; height: 3px; background: repeating-linear-gradient(90deg, #222 0 3px, transparent 3px 5px); }
.memo { display: flex; height: 136px; flex: none; background: #eaeaea; }
.memo .text { flex: 1; padding: 3px 8px; line-height: 16px; white-space: nowrap; }
.mbar { display: flex; flex-direction: column; align-items: center; justify-content: space-between; width: 20px; padding: 10px 0; background: #e2e2e2; color: #777; }

/* cursor highlight */
.spot { position: absolute; left: 912px; top: 611px; width: 25px; height: 25px; border-radius: 50%; background: radial-gradient(#f2e24e 50%, rgba(244, 230, 100, .5) 75%, transparent); }
.pointer { position: absolute; left: 924px; top: 622px; width: 15px; height: 22px; }

/* video controls */
.controls { position: absolute; left: 0; right: 0; bottom: 0; height: 256px; display: flex; flex-direction: column; justify-content: flex-end; background: linear-gradient(rgba(0, 0, 0, 0), #000); }
.crow { display: flex; align-items: center; height: 30px; margin-bottom: 20px; padding: 0 31px 0 4px; color: #fff; }
.time { flex: 1; font: 18px/24px "Open Sans", sans-serif; }
.crow button { display: flex; }
.crow .fs { margin-left: 52px; }
.seek { width: 100%; height: 15px; margin: 0 0 20px; appearance: none; background: none; display: block; }
.seek::-webkit-slider-runnable-track { height: 5px; background: linear-gradient(90deg, #fff 73%, #b0b0b0 73%, #b0b0b0 82.3%, #484848 82.3%); }
.seek::-webkit-slider-thumb { appearance: none; width: 15px; height: 15px; margin-top: -5px; border-radius: 50%; background: #fff; }
```
